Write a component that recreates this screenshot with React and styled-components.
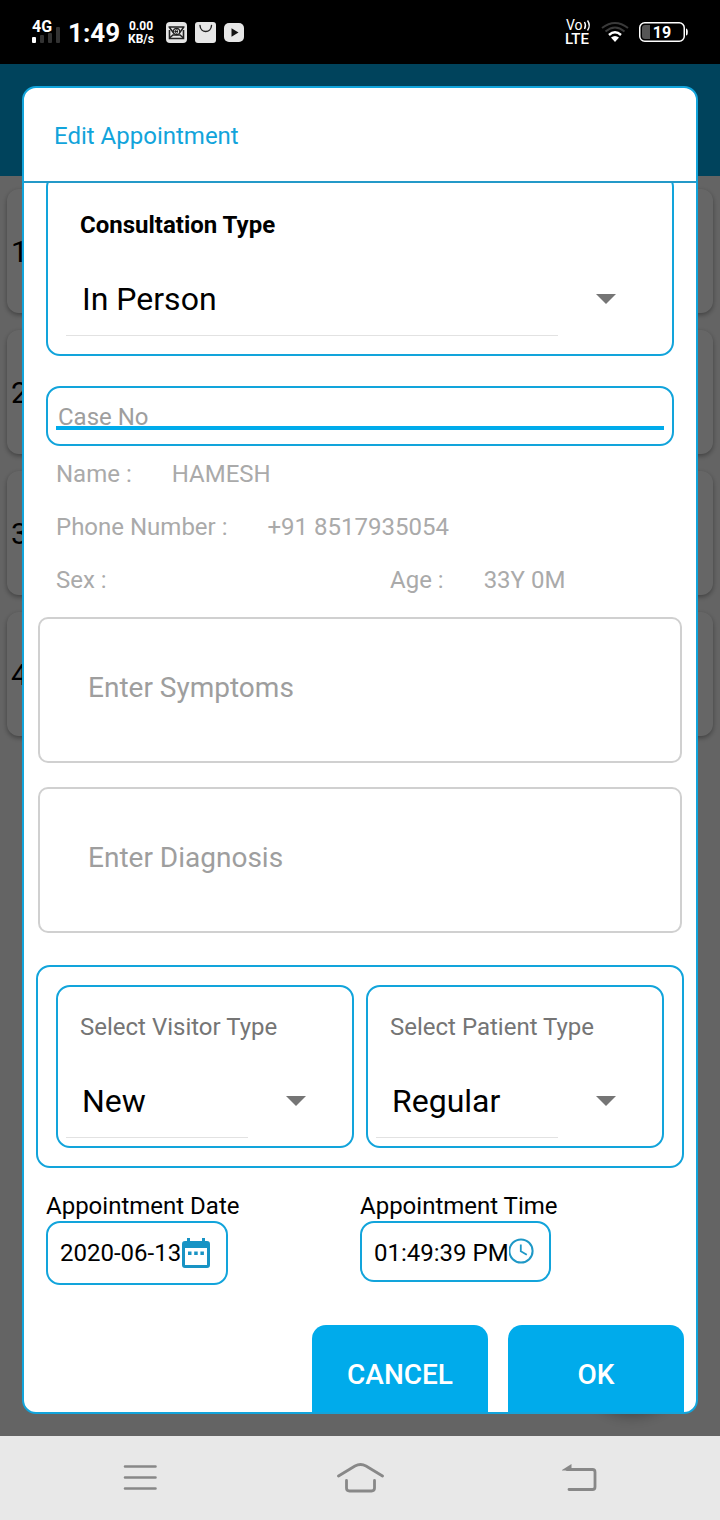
import React from 'react';
import styled, { createGlobalStyle } from 'styled-components';

const line = '#12a4db';
const accent = '#00abeb';

const GlobalStyle = createGlobalStyle`
  *, *::before, *::after { box-sizing: border-box; }
  body { margin: 0; background: #fafafa; font-family: Roboto, "Liberation Sans", sans-serif; color: #000; }
  button, input, select, textarea { font: inherit; color: inherit; margin: 0; }
`;

const Page = styled.div`
  display: flex;
  flex-direction: column;
  height: 100vh;
  overflow: hidden;
`;

/* ---- status bar ---- */
const StatusBar = styled.header`
  flex: none;
  display: flex;
  align-items: center;
  justify-content: space-between;
  height: 64px;
  padding: 0 32px;
  background: #000;
  color: #fff;
`;

const StatusGroup = styled.div`
  display: flex;
  align-items: center;
  gap: ${(p) => p.$gap}px;
  svg { overflow: visible; }
`;

const Clock = styled.span`
  padding-top: 2px;
  font-size: 26px;
  line-height: 32px;
  font-weight: 700;
`;

const NetSpeed = styled.span`
  padding-top: 2px;
  margin-right: 4px;
  font-size: 12px;
  line-height: 13px;
  font-weight: 700;
  text-align: center;
`;

/* ---- screen behind the dialog ---- */
const Stage = styled.main`
  position: relative;
  flex: 1;
  min-height: 0;
  display: flex;
  padding: 22px;
`;

const Backdrop = styled.div`
  position: absolute;
  inset: 0;
  overflow: hidden;
  background: #fafafa;
`;

const Toolbar = styled.div`
  height: 112px;
  background: #00a8e6;
`;

const CardList = styled.div`
  display: flex;
  flex-direction: column;
  gap: 17px;
  padding: 13px 7px;
`;

const Card = styled.div`
  display: flex;
  align-items: center;
  height: 124px;
  padding: 2px 4px 0;
  border-radius: 12px;
  background: #fff;
  box-shadow: 0 2px 5px rgba(0, 0, 0, 0.35);
  font-size: 30px;
  line-height: 36px;
`;

const Fab = styled.div`
  position: absolute;
  right: 32px;
  bottom: 26px;
  width: 112px;
  height: 112px;
  border-radius: 50%;
  background: ${accent};
  box-shadow: 0 6px 14px rgba(0, 0, 0, 0.3);
`;

const Scrim = styled.div`
  position: absolute;
  inset: 0;
  background: rgba(0, 0, 0, 0.6);
`;

/* ---- dialog ---- */
const Dialog = styled.section`
  position: relative;
  flex: 1;
  min-width: 0;
  display: flex;
  flex-direction: column;
  border: 2px solid ${line};
  border-radius: 14px;
  background: #fff;
  overflow: hidden;
`;

const DialogTitle = styled.h1`
  flex: none;
  margin: 0;
  padding: 34px 30px 31px;
  border-bottom: 2px solid #2499c8;
  color: ${line};
  font-size: 24px;
  line-height: 28px;
  font-weight: 400;
`;

const DialogBody = styled.form`
  flex: 1;
  min-height: 0;
  padding: 0 12px;
  overflow: hidden;
`;

const Inset = styled.div`
  margin: ${(p) => p.$top}px 10px 0;
`;

const FieldBox = styled.div`
  min-width: 0;
  padding: ${(p) => (p.$roomy ? 18 : 8)}px;
  border: 2px solid ${line};
  border-radius: 14px;
`;

const FieldLabel = styled.label`
  display: block;
  padding: 18px 14px 0;
  color: ${(p) => (p.$strong ? '#000' : '#757575')};
  font-size: 24px;
  line-height: 28px;
  font-weight: ${(p) => (p.$strong ? 700 : 400)};
  white-space: nowrap;
`;

const SelectRow = styled.div`
  display: grid;
  align-items: center;
  margin-top: 24px;
  > * { grid-area: 1 / 1; }
`;

const Select = styled.select`
  width: 100%;
  height: 72px;
  padding: 0 60px 0 16px;
  border: 0;
  background: transparent;
  appearance: none;
  outline: none;
  font-size: 32px;
  line-height: 40px;
`;

const Arrow = styled.svg`
  justify-self: end;
  margin-right: 38px;
  pointer-events: none;
`;

const Underline = styled.div`
  height: 1px;
  margin-right: 96px;
  background: #e2e2e2;
`;

const CaseBox = styled.div`
  height: 60px;
  padding: 0 8px;
  border: 2px solid ${line};
  border-radius: 14px;
`;

const CaseInput = styled.input`
  display: block;
  width: 100%;
  height: 42px;
  padding: 16px 2px 0;
  border: 0;
  outline: none;
  background: transparent;
  box-shadow: inset 0 -4px ${accent};
  font-size: 24px;
  line-height: 28px;
  &::placeholder { color: #9e9e9e; opacity: 1; }
`;

const InfoList = styled.dl`
  margin: 1px 0 0 20px;
  color: #aaa;
  font-size: 24px;
  line-height: 28px;
`;

const InfoRow = styled.div`
  display: grid;
  grid-template-columns: ${(p) => (p.$split ? '1fr 1fr' : '1fr')};
  column-gap: 40px;
  align-items: center;
  height: 53px;
`;

const InfoItem = styled.div`
  display: flex;
  gap: 40px;
  dt, dd { margin: 0; white-space: nowrap; }
`;

const Notes = styled.textarea`
  display: block;
  width: calc(100% - 4px);
  height: 146px;
  margin: ${(p) => p.$top}px 2px 0;
  padding: 52px 48px;
  border: 2px solid #d0d0d0;
  border-radius: 10px;
  outline: none;
  resize: none;
  overflow: hidden;
  background: transparent;
  font-size: 28px;
  line-height: 34px;
  &::placeholder { color: #9e9e9e; opacity: 1; }
`;

const TypeGroup = styled.div`
  display: grid;
  grid-template-columns: 1fr 1fr;
  gap: 12px;
  margin-top: 32px;
  padding: 18px;
  border: 2px solid ${line};
  border-radius: 14px;
`;

const Schedule = styled.div`
  display: grid;
  grid-template-columns: 1fr 1fr;
  align-items: start;
`;

const ScheduleItem = styled.div`
  display: grid;
  justify-items: start;
  row-gap: 1px;
`;

const ScheduleLabel = styled.label`
  font-size: 24px;
  line-height: 28px;
`;

const PickerButton = styled.button`
  display: flex;
  align-items: center;
  padding: 14px 14px ${(p) => (p.$short ? 11 : 14)}px 12px;
  border: 2px solid ${line};
  border-radius: 14px;
  background: transparent;
  font-size: 24px;
  line-height: 28px;
  white-space: nowrap;
  svg { flex: none; }
`;

const Actions = styled.div`
  display: flex;
  justify-content: flex-end;
  gap: 20px;
  margin-top: 40px;
`;

const ActionButton = styled.button`
  width: 176px;
  height: 100px;
  border: 0;
  border-radius: 14px;
  background: ${accent};
  color: #fff;
  font-size: 28px;
  line-height: 34px;
  font-weight: 500;
`;

/* ---- navigation bar ---- */
const NavBar = styled.nav`
  flex: none;
  display: grid;
  grid-template-columns: repeat(3, 1fr);
  height: 84px;
  padding: 0 30px;
  background: #e8e8e8;
`;

const NavButton = styled.button`
  display: flex;
  align-items: center;
  justify-content: center;
  padding: 0;
  border: 0;
  background: transparent;
`;

const StatusText = styled.text`
  font-family: Roboto, "Liberation Sans", sans-serif;
  fill: #fff;
`;

function SelectField({ id, label, value, roomy, strong }) {
  return (
    <FieldBox $roomy={roomy}>
      <FieldLabel htmlFor={id} $strong={strong}>{label}</FieldLabel>
      <SelectRow>
        <Select id={id} defaultValue={value}>
          <option>{value}</option>
        </Select>
        <Arrow width="20" height="10" viewBox="0 0 20 10" aria-hidden="true">
          <path d="M0 0h20L10 10z" fill="#757575" />
        </Arrow>
      </SelectRow>
      <Underline />
    </FieldBox>
  );
}

function SignalIcon() {
  return (
    <svg width="28" height="32" viewBox="0 -3 28 32" aria-hidden="true">
      <StatusText x="0" y="13" fontSize="16" fontWeight="700">4G</StatusText>
      <rect x="0" y="18" width="4" height="6" rx="1" fill="#fff" />
      <rect x="8" y="16" width="4" height="8" rx="1" fill="#333" />
      <rect x="16" y="14" width="4" height="10" rx="1" fill="#333" />
      <rect x="24" y="8" width="4" height="16" rx="1" fill="#333" />
    </svg>
  );
}

function MailIcon() {
  return (
    <svg width="21" height="21" viewBox="0 0 21 21" aria-hidden="true">
      <rect width="21" height="21" rx="4" fill="#e6e6e6" />
      <path d="M3.500 8v8.500h14V8" fill="none" stroke="#222" strokeWidth="1.600" />
      <path d="M2.500 5h16M3.500 5.500L8 11.500M17.500 5.500L13 11.500M3.500 16l3.500-3h7l3.500 3" fill="none" stroke="#222" strokeWidth="1.500" />
      <circle cx="10.500" cy="9.500" r="3.200" fill="#e6e6e6" stroke="#222" strokeWidth="1.200" />
      <path d="M9 9.500h3M12 8.500a1.700 1.700 0 1 0 0 2" fill="none" stroke="#222" strokeWidth="1" />
    </svg>
  );
}

function BagIcon() {
  return (
    <svg width="21" height="21" viewBox="0 0 21 21" aria-hidden="true">
      <rect width="21" height="21" rx="3" fill="#e6e6e6" />
      <path d="M5 3.500c.5 8 11 8 11.500 0" fill="none" stroke="#222" strokeWidth="1.400" strokeLinecap="round" />
    </svg>
  );
}

function PlayIcon() {
  return (
    <svg width="21" height="21" viewBox="0 0 21 21" aria-hidden="true">
      <rect y="1" width="20" height="19" rx="5" fill="#e6e6e6" />
      <path d="M7.500 6.300l7 4.200-7 4.200z" fill="#111" />
    </svg>
  );
}

function VolteIcon() {
  return (
    <svg width="25" height="28" viewBox="0 0 25 28" aria-hidden="true">
      <StatusText x="0" y="12" fontSize="14" fontWeight="400">Vo</StatusText>
      <path d="M18.500 4q2 3.500 0 7M21.500 2.500q3.500 5 0 10" fill="none" stroke="#fff" strokeWidth="1.400" />
      <StatusText x="-1" y="26" fontSize="15" fontWeight="500">LTE</StatusText>
    </svg>
  );
}

function WifiIcon() {
  return (
    <svg width="28" height="20" viewBox="0 0 28 20" aria-hidden="true">
      <g fill="none" strokeWidth="2">
        <path d="M1 6Q14-4 27 6" stroke="#3a3a3a" />
        <path d="M4.500 9.500Q14 1.500 23.500 9.500" stroke="#3a3a3a" />
        <path d="M8 13Q14 7.500 20 13" stroke="#fff" strokeWidth="2.400" />
      </g>
      <path d="M10 15.500q4-3 8 0L14 20z" fill="#fff" />
    </svg>
  );
}

function BatteryIcon() {
  return (
    <svg width="49" height="20" viewBox="0 0 49 20" aria-hidden="true">
      <rect x="0.750" y="0.750" width="44.500" height="18.500" rx="5" fill="none" stroke="#fff" strokeWidth="1.500" />
      <path d="M6 3h5v14H6a3 3 0 0 1-3-3V6a3 3 0 0 1 3-3z" fill="#555" />
      <path d="M47 6.500q1.800 0 1.800 3.500T47 13.500z" fill="#fff" />
      <StatusText x="23" y="15.500" fontSize="16" fontWeight="700" textAnchor="middle">19</StatusText>
    </svg>
  );
}

function CalendarIcon() {
  return (
    <svg width="31" height="32" viewBox="1 0 31 32" aria-hidden="true">
      <path
        fillRule="evenodd"
        fill="#1893c4"
        d="M7 1h3v3h12V1h3v3h2a3 3 0 0 1 3 3v21a3 3 0 0 1-3 3H5a3 3 0 0 1-3-3V7a3 3 0 0 1 3-3h2zM5 11v17h22V11z"
      />
      <path d="M8 14.500h3.500V18H8zM14.200 14.500h3.500V18h-3.500zM20.400 14.500h3.500V18h-3.500z" fill="#1893c4" />
    </svg>
  );
}

function ClockIcon() {
  return (
    <svg width="26" height="32" viewBox="2 -1 26 32" aria-hidden="true">
      <circle cx="14" cy="13" r="11.600" fill="none" stroke="#1e98c6" strokeWidth="2" />
      <path d="M13.800 6.500V13.300l6 3.500" fill="none" stroke="#1e98c6" strokeWidth="1.800" />
    </svg>
  );
}

export default function App() {
  return (
    <Page>
      <GlobalStyle />
      <StatusBar>
        <StatusGroup $gap={8}>
          <SignalIcon />
          <Clock>1:49</Clock>
          <NetSpeed>0.00<br />KB/s</NetSpeed>
          <MailIcon />
          <BagIcon />
          <PlayIcon />
        </StatusGroup>
        <StatusGroup $gap={10}>
          <VolteIcon />
          <WifiIcon />
          <BatteryIcon />
        </StatusGroup>
      </StatusBar>

      <Stage>
        <Backdrop aria-hidden="true">
          <Toolbar />
          <CardList>
            {[1, 2, 3, 4].map((n) => <Card key={n}>{n}</Card>)}
          </CardList>
          <Fab />
          <Scrim />
        </Backdrop>

        <Dialog role="dialog" aria-labelledby="dialog-title">
          <DialogTitle id="dialog-title">Edit Appointment</DialogTitle>
          <DialogBody onSubmit={(e) => e.preventDefault()}>
            <Inset $top={-10}>
              <SelectField id="consultation" label="Consultation Type" value="In Person" roomy strong />
            </Inset>
            <Inset $top={30}>
              <CaseBox>
                <CaseInput aria-label="Case No" placeholder="Case No" />
              </CaseBox>
            </Inset>
            <InfoList>
              <InfoRow>
                <InfoItem><dt>Name :</dt><dd>HAMESH</dd></InfoItem>
              </InfoRow>
              <InfoRow>
                <InfoItem><dt>Phone Number :</dt><dd>+91 8517935054</dd></InfoItem>
              </InfoRow>
              <InfoRow $split>
                <InfoItem><dt>Sex :</dt><dd /></InfoItem>
                <InfoItem><dt>Age :</dt><dd>33Y 0M</dd></InfoItem>
              </InfoRow>
            </InfoList>
            <Notes $top={11} aria-label="Symptoms" placeholder="Enter Symptoms" />
            <Notes $top={24} aria-label="Diagnosis" placeholder="Enter Diagnosis" />
            <TypeGroup>
              <SelectField id="visitor" label="Select Visitor Type" value="New" />
              <SelectField id="patient" label="Select Patient Type" value="Regular" />
            </TypeGroup>
            <Inset $top={24}>
              <Schedule>
                <ScheduleItem>
                  <ScheduleLabel htmlFor="date">Appointment Date</ScheduleLabel>
                  <PickerButton type="button" id="date">2020-06-13<CalendarIcon /></PickerButton>
                </ScheduleItem>
                <ScheduleItem>
                  <ScheduleLabel htmlFor="time">Appointment Time</ScheduleLabel>
                  <PickerButton type="button" id="time" $short>01:49:39 PM<ClockIcon /></PickerButton>
                </ScheduleItem>
              </Schedule>
            </Inset>
            <Actions>
              <ActionButton type="button">CANCEL</ActionButton>
              <ActionButton type="submit">OK</ActionButton>
            </Actions>
          </DialogBody>
        </Dialog>
      </Stage>

      <NavBar>
        <NavButton type="button" aria-label="Recent apps">
          <svg width="34" height="26" viewBox="0 0 34 26">
            <path d="M2 1.500h30.500M2 12.500h30.500M2 23.500h30.500" stroke="#888" strokeWidth="2.600" strokeLinecap="round" />
          </svg>
        </NavButton>
        <NavButton type="button" aria-label="Home">
          <svg width="48" height="30" viewBox="0 0 48 30" fill="none" stroke="#888" strokeWidth="2.800" strokeLinecap="round" strokeLinejoin="round">
            <path d="M2.500 13L19 3Q24.500 0 30 3L46.500 13" />
            <path d="M10.500 17.500V25q0 3 3 3h22q3 0 3-3v-7.500" />
          </svg>
        </NavButton>
        <NavButton type="button" aria-label="Back">
          <svg width="36" height="28" viewBox="0 0 36 28" fill="none">
            <path d="M5 5.500h25.500q2.500 0 2.500 2.500v15q0 2.500-2.500 2.500H7" stroke="#888" strokeWidth="2.800" strokeLinecap="round" />
            <path d="M0 6L9.500 0v6.500H0z" fill="#888" />
          </svg>
        </NavButton>
      </NavBar>
    </Page>
  );
}
